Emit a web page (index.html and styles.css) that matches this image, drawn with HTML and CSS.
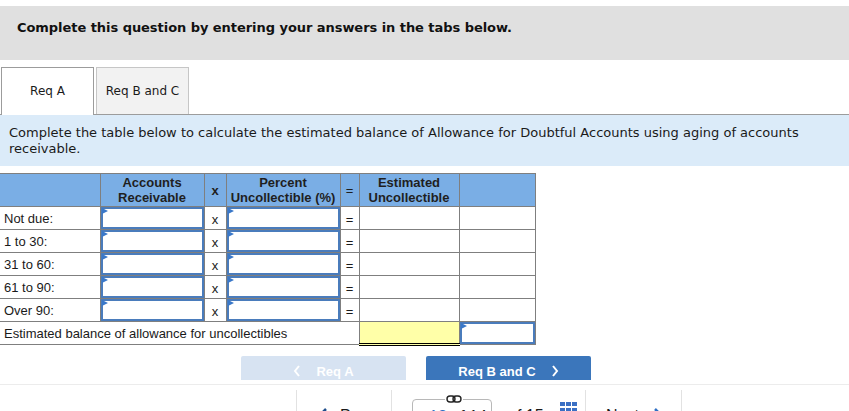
FILE: index.html
```html
<!DOCTYPE html>
<html lang="en">
<head>
  <meta charset="UTF-8" />
  <title>Req A - Aging of Accounts Receivable</title>
  <link rel="stylesheet" href="styles.css">
</head>
<body>
  <div class="banner">Complete this question by entering your answers in the tabs below.</div>

  <div class="tabs">
    <div class="tab active">Req A</div>
    <div class="tab">Req B and C</div>
  </div>

  <div class="prompt">Complete the table below to calculate the estimated balance of Allowance for Doubtful Accounts using aging of accounts receivable.</div>

  <table class="aging">
    <colgroup>
      <col class="c-label"><col class="c-ar"><col class="c-op1"><col class="c-pct"><col class="c-op2"><col class="c-est"><col class="c-last">
    </colgroup>
    <thead>
      <tr>
        <th class="first"></th>
        <th>Accounts<br>Receivable</th>
        <th>x</th>
        <th>Percent<br>Uncollectible (%)</th>
        <th class="eq">=</th>
        <th>Estimated<br>Uncollectible</th>
        <th></th>
      </tr>
    </thead>
    <tbody>
      <tr>
        <td class="label">Not due:</td>
        <td class="entry"><span class="flag"></span><input type="text"></td>
        <td class="op">x</td>
        <td class="entry"><span class="flag"></span><input type="text"></td>
        <td class="op">=</td>
        <td></td><td></td>
      </tr>
      <tr>
        <td class="label">1 to 30:</td>
        <td class="entry"><span class="flag"></span><input type="text"></td>
        <td class="op">x</td>
        <td class="entry"><span class="flag"></span><input type="text"></td>
        <td class="op">=</td>
        <td></td><td></td>
      </tr>
      <tr>
        <td class="label">31 to 60:</td>
        <td class="entry"><span class="flag"></span><input type="text"></td>
        <td class="op">x</td>
        <td class="entry"><span class="flag"></span><input type="text"></td>
        <td class="op">=</td>
        <td></td><td></td>
      </tr>
      <tr>
        <td class="label">61 to 90:</td>
        <td class="entry"><span class="flag"></span><input type="text"></td>
        <td class="op">x</td>
        <td class="entry"><span class="flag"></span><input type="text"></td>
        <td class="op">=</td>
        <td></td><td></td>
      </tr>
      <tr>
        <td class="label">Over 90:</td>
        <td class="entry"><span class="flag"></span><input type="text"></td>
        <td class="op">x</td>
        <td class="entry"><span class="flag"></span><input type="text"></td>
        <td class="op">=</td>
        <td></td><td></td>
      </tr>
      <tr class="total">
        <td class="label" colspan="5">Estimated balance of allowance for uncollectibles</td>
        <td class="sum"></td>
        <td class="entry"><span class="flag"></span><input type="text"></td>
      </tr>
    </tbody>
  </table>

  <div class="nav">
    <button class="nav-btn disabled">
      <svg width="8" height="12" viewBox="0 0 8 12"><polyline points="6,1 2,6 6,11" fill="none" stroke="#fff" stroke-width="2"/></svg>
      <span>Req A</span>
    </button>
    <button class="nav-btn">
      <span>Req B and C</span>
      <svg width="8" height="12" viewBox="0 0 8 12"><polyline points="2,1 6,6 2,11" fill="none" stroke="#fff" stroke-width="2"/></svg>
    </button>
  </div>

  <div class="footer">
    <div class="foot-cell spacer"></div>
    <div class="foot-cell prev">
      <svg width="10" height="14" viewBox="0 0 10 14"><polyline points="8,2 3,7 8,12" fill="none" stroke="#1f4e8c" stroke-width="2.5"/></svg>
      <span>Prev</span>
    </div>
    <div class="foot-cell pager">
      <div class="page-box">
        <svg class="link-icon" width="16" height="8" viewBox="0 0 16 8"><rect x="1" y="1" width="8" height="6" rx="3" fill="none" stroke="#222" stroke-width="1.4"/><rect x="7" y="1" width="8" height="6" rx="3" fill="none" stroke="#222" stroke-width="1.4"/></svg>
        <span class="page-num">12</span> <span>of 14</span>
      </div>
      <span class="page-total">of 15</span>
      <svg class="grid-icon" width="17" height="16" viewBox="0 0 17 16">
        <rect x="0" y="0" width="5" height="4" fill="#3a6fc4"/><rect x="6" y="0" width="5" height="4" fill="#3a6fc4"/><rect x="12" y="0" width="5" height="4" fill="#3a6fc4"/>
        <rect x="0" y="6" width="5" height="4" fill="#3a6fc4"/><rect x="6" y="6" width="5" height="4" fill="#3a6fc4"/><rect x="12" y="6" width="5" height="4" fill="#3a6fc4"/>
      </svg>
    </div>
    <div class="foot-cell next">
      <span>Next</span>
      <svg width="10" height="14" viewBox="0 0 10 14"><polyline points="2,2 7,7 2,12" fill="none" stroke="#2f6fc4" stroke-width="2.5"/></svg>
    </div>
    <div class="foot-cell"></div>
  </div>
</body>
</html>
```

FILE: styles.css
```css
body {
  margin: 0;
  padding-top: 6px;
  background: #fff;
  color: #1a1a1a;
  font-family: "DejaVu Sans", Verdana, sans-serif;
  overflow: hidden;
}
.banner {
  height: 54px;
  box-sizing: border-box;
  padding: 14px 17px 0;
  background: #e0e0e0;
  font-size: 13px;
  font-weight: bold;
  line-height: 16px;
  letter-spacing: -0.05px;
  color: #111;
}
.tabs {
  display: flex;
  gap: 2px;
  margin-top: 7px;
  padding-left: 1px;
  border-bottom: 1px solid #9c9c9c;
}
.tab {
  width: 93px;
  height: 47px;
  box-sizing: border-box;
  border: 1px solid #c6c6c6;
  border-bottom: none;
  background: #f2f2f2;
  font-size: 12px;
  line-height: 46px;
  text-align: center;
  color: #1a1a1a;
}
.tab.active {
  border-color: #9c9c9c;
  background: #fff;
  margin-bottom: -1px;
  height: 48px;
}
.prompt {
  padding: 10px 9px 9px;
  background: #dbebf9;
  font-size: 13px;
  line-height: 16px;
  color: #1a1a1a;
}
.aging {
  margin-top: 7px;
  width: 535px;
  table-layout: fixed;
  border-collapse: collapse;
  font-family: "Liberation Sans", Arial, sans-serif;
  font-size: 13px;
  color: #1a1a1a;
}
.c-label { width: 100px; }
.c-ar { width: 104px; }
.c-op1 { width: 22px; }
.c-pct { width: 114px; }
.c-op2 { width: 19px; }
.c-est { width: 100px; }
.c-last { width: 76px; }
.aging th,
.aging td {
  border: 1px solid #7f7f7f;
  padding: 0;
}
.aging tr > :first-child {
  border-left: none;
}
.aging th {
  background: #7aaee5;
  font-weight: bold;
  line-height: 15px;
  padding: 1px 0;
  text-align: center;
  color: #1f1f1f;
}
.aging th.eq {
  font-weight: normal;
}
.aging td.label {
  padding-left: 4px;
  text-align: left;
  white-space: nowrap;
}
.aging td.op {
  text-align: center;
  vertical-align: middle;
  padding-top: 2px;
}
.aging td.entry {
  position: relative;
  height: 22px;
}
.aging input {
  display: block;
  width: 100%;
  height: 22px;
  box-sizing: border-box;
  margin: 0;
  padding: 0 4px;
  border: 2px solid #4a7cbc;
  background: #fff;
  font: inherit;
}
.flag {
  position: absolute;
  top: 1px;
  left: 1px;
  width: 0;
  height: 0;
  border-top: 3px solid transparent;
  border-bottom: 3px solid transparent;
  border-left: 6px solid #3a78c9;
}
.total td.sum {
  background: #ffffa8;
  border-top: 1px solid #000;
  border-bottom: 3px double #000;
}
.nav {
  display: flex;
  gap: 20px;
  margin-top: 10px;
  padding-left: 241px;
  height: 24px;
  overflow: hidden;
}
.nav-btn {
  display: flex;
  align-items: center;
  justify-content: center;
  gap: 15px;
  width: 165px;
  height: 30px;
  flex-shrink: 0;
  padding: 0;
  border: none;
  border-radius: 2px 2px 0 0;
  background: #3b76bb;
  color: #fff;
  font-family: "Liberation Sans", Arial, sans-serif;
  font-size: 13px;
  font-weight: bold;
  cursor: pointer;
}
.nav-btn.disabled {
  background: #d7e3f2;
  cursor: default;
}
.footer {
  display: flex;
  margin-top: 4px;
  border-top: 1px solid #ececec;
  padding-top: 5px;
  height: 40px;
  font-family: "Liberation Sans", Arial, sans-serif;
  font-size: 16px;
  color: #1a1a1a;
}
.foot-cell {
  display: flex;
  align-items: flex-start;
  padding-top: 17px;
  border-left: 1px solid #e2e2e2;
}
.foot-cell.spacer {
  width: 296px;
  border-left: none;
}
.prev {
  width: 95px;
  padding-left: 21px;
  box-sizing: border-box;
  gap: 12px;
}
.pager {
  width: 194px;
  box-sizing: border-box;
  padding-left: 20px;
  padding-top: 9px;
  gap: 16px;
}
.page-box {
  position: relative;
  width: 80px;
  height: 30px;
  box-sizing: border-box;
  border: 1px solid #b8b8b8;
  border-radius: 4px;
  padding: 8px 0 0 16px;
  font-size: 16px;
}
.page-num {
  color: #2f6fc4;
}
.link-icon {
  position: absolute;
  top: -5px;
  left: 32px;
  background: #fff;
  padding: 0 1px;
}
.page-total {
  padding-top: 8px;
}
.grid-icon {
  margin-top: 3px;
}
.next {
  width: 96px;
  box-sizing: border-box;
  padding-left: 20px;
  gap: 14px;
}
.foot-cell:last-child {
  flex: 1;
}
```
